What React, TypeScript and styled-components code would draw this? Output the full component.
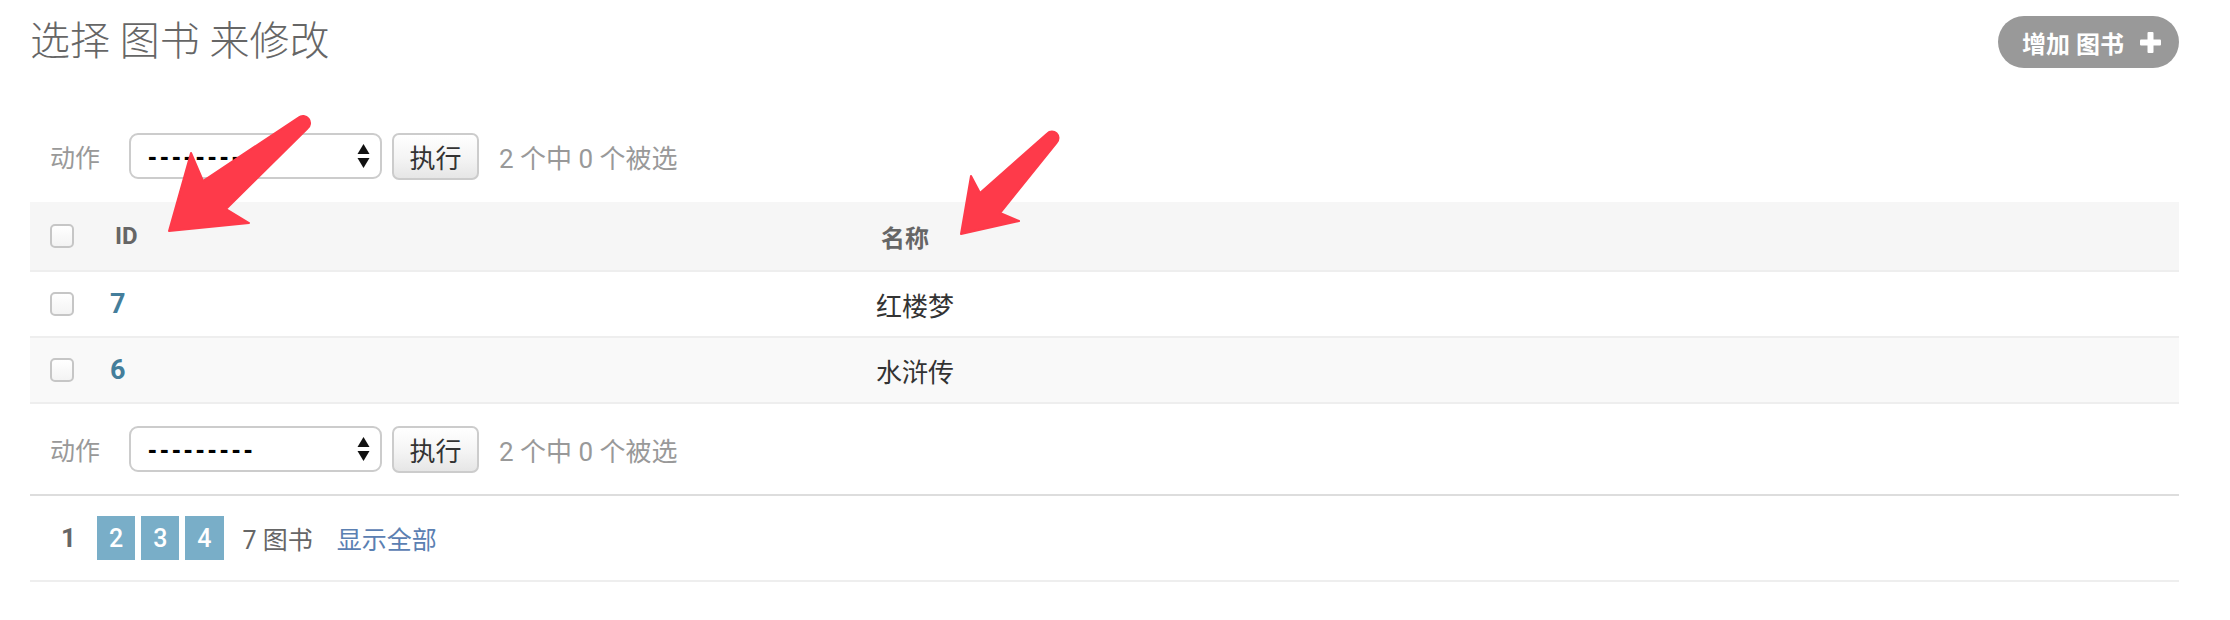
import styled, { createGlobalStyle } from "styled-components"

const GlobalStyle = createGlobalStyle`
    html, body {
        margin: 0;
        padding: 0;
        background: #fff;
    }

    body {
        font-family: Roboto, "Noto Sans CJK SC", sans-serif;
        color: #333;
    }
`

const books = [
    { id: 7, name: "红楼梦" },
    { id: 6, name: "水浒传" },
]

const ActionBar = () => (
    <Actions>
        <ActionLabel>动作</ActionLabel>
        <SelectBox>
            <span>---------</span>
            <svg width="13" height="26" viewBox="0 0 13 26">
                <path d="M6.5 1 L12.5 11 L0.5 11 Z" fill="#111" />
                <path d="M6.5 25 L12.5 15 L0.5 15 Z" fill="#111" />
            </svg>
        </SelectBox>
        <GoButton>执行</GoButton>
        <Counter>2 个中 0 个被选</Counter>
    </Actions>
)

const App = () => {

    return (

        <Page>

            <GlobalStyle />

            <Header>

                <Title>选择 图书 来修改</Title>

                <AddButton>
                    增加 图书
                    <svg width="21" height="21" viewBox="0 0 21 21">
                        <rect x="7.5" y="0" width="6" height="21" rx="1" fill="#fff" />
                        <rect x="0" y="7.5" width="21" height="6" rx="1" fill="#fff" />
                    </svg>
                </AddButton>

            </Header>

            <ActionBar />

            <Table>

                <HeadRow>
                    <CheckCell><Checkbox /></CheckCell>
                    <HeadCell>ID</HeadCell>
                    <HeadCell>名称</HeadCell>
                </HeadRow>

                {books.map((book, i) => (
                    <Row key={book.id} $alt={i % 2 === 1}>
                        <CheckCell><Checkbox /></CheckCell>
                        <IdCell>{book.id}</IdCell>
                        <NameCell>{book.name}</NameCell>
                    </Row>
                ))}

            </Table>

            <BottomActions>
                <ActionBar />
            </BottomActions>

            <Paginator>
                <ThisPage>1</ThisPage>
                <PageLink>2</PageLink>
                <PageLink>3</PageLink>
                <PageLink>4</PageLink>
                <Total>7 图书</Total>
                <ShowAll>显示全部</ShowAll>
            </Paginator>

            <Annotations width="2230" height="620" viewBox="0 0 2230 620">
                <path
                    d="M169 231 L191 153 L203 181 L298.6 117.5 A7 7 0 0 1 307.4 128.5 L226 209 L249 223 Z"
                    fill="#fe3a4a"
                    stroke="#fe3a4a"
                    strokeWidth="2"
                    strokeLinejoin="round"
                />
                <path
                    d="M961 234 L971 176 L980 193 L1047.3 133.5 A6.5 6.5 0 0 1 1056.7 142.5 L1000 213 L1019 221 Z"
                    fill="#fe3a4a"
                    stroke="#fe3a4a"
                    strokeWidth="2"
                    strokeLinejoin="round"
                />
            </Annotations>

        </Page>

    )

}

const Page = styled.div`
    position: relative;
    width: 2149px;
    height: 620px;
    padding: 0 51px 0 30px;
    overflow: hidden;
`

const Header = styled.div`
    height: 52px;
    margin-top: 16px;
    display: flex;
    align-items: center;
    justify-content: space-between;
`

const Title = styled.h1`
    margin: 0;
    font-size: 40px;
    font-weight: 300;
    color: #666;
    line-height: 52px;
`

const AddButton = styled.a`
    height: 52px;
    display: flex;
    align-items: center;
    gap: 16px;
    padding: 0 15px 0 24px;
    border-radius: 26px;
    background: #999;
    color: #fff;
    font-size: 24px;
    font-weight: 600;
    box-sizing: border-box;
    width: 181px;
`

const Actions = styled.div`
    height: 46px;
    margin-top: 65px;
    padding-left: 20px;
    display: flex;
    align-items: center;
`

const ActionLabel = styled.label`
    width: 50px;
    font-size: 25px;
    color: #999;
    margin-right: 29px;
    white-space: nowrap;
`

const SelectBox = styled.div`
    width: 253px;
    height: 46px;
    box-sizing: border-box;
    border: 2px solid #ccc;
    border-radius: 9px;
    background: #fff;
    display: flex;
    align-items: center;
    justify-content: space-between;
    padding: 0 10px 0 17px;
    font-family: "Liberation Sans", sans-serif;
    font-size: 26px;
    font-weight: 700;
    color: #000;
    letter-spacing: 3.3px;
`

const GoButton = styled.button`
    width: 87px;
    height: 47px;
    margin-left: 10px;
    box-sizing: border-box;
    border: 2px solid #ccc;
    border-radius: 7px;
    background: linear-gradient(#fff, #f4f4f4 55%, #e6e6e6);
    font-family: Roboto, "Noto Sans CJK SC", sans-serif;
    font-size: 26px;
    color: #333;
    padding: 0;
`

const Counter = styled.span`
    margin-left: 20px;
    font-size: 26px;
    color: #999;
`

const Table = styled.div`
    margin-top: 23px;
`

const HeadRow = styled.div`
    display: grid;
    grid-template-columns: 60px 766px 1fr;
    height: 68px;
    background: #f6f6f6;
    border-bottom: 2px solid #eee;
`

const Row = styled.div<{ $alt: boolean }>`
    display: grid;
    grid-template-columns: 60px 766px 1fr;
    height: 64px;
    background: ${(p) => (p.$alt ? "#f9f9f9" : "#fff")};
    border-bottom: 2px solid #eee;
`

const CheckCell = styled.div`
    display: flex;
    align-items: center;
    padding-left: 20px;
`

const Checkbox = styled.span`
    width: 24px;
    height: 24px;
    box-sizing: border-box;
    border: 2px solid #c6c6c6;
    border-radius: 5px;
    background: linear-gradient(#fff, #f3f3f3);
`

const HeadCell = styled.div`
    display: flex;
    align-items: center;
    padding-left: 25px;
    font-size: 24px;
    font-weight: 700;
    color: #666;
`

const IdCell = styled.div`
    display: flex;
    align-items: center;
    padding-left: 20px;
    font-size: 27px;
    font-weight: 700;
    color: #447e9b;
`

const NameCell = styled.div`
    display: flex;
    align-items: center;
    padding-left: 20px;
    font-size: 26px;
    color: #333;
`

const BottomActions = styled.div`
    margin-top: -43px;
`

const Paginator = styled.div`
    margin-top: 22px;
    height: 84px;
    border-top: 2px solid #ddd;
    border-bottom: 2px solid #eee;
    display: flex;
    align-items: center;
    padding-left: 31px;
    font-size: 25px;
`

const ThisPage = styled.span`
    font-size: 26px;
    font-weight: 700;
    color: #666;
    margin-right: 21px;
`

const PageLink = styled.a`
    height: 44px;
    padding: 0 12px;
    margin-right: 6px;
    display: flex;
    align-items: center;
    background: #79aec8;
    color: #fff;
    font-weight: 500;
`

const Total = styled.span`
    margin-left: 13px;
    color: #666;
`

const ShowAll = styled.a`
    margin-left: 24px;
    color: #5b80b2;
`

const Annotations = styled.svg`
    position: absolute;
    top: 0;
    left: 0;
    pointer-events: none;
`

export default App
